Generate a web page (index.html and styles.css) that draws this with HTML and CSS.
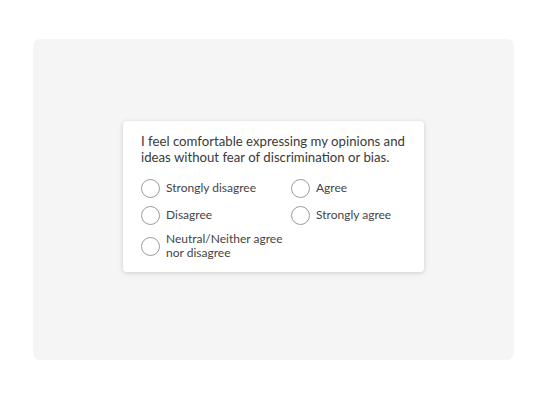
FILE: index.html
```html
<!DOCTYPE html>
<html lang="en">
  <head>
    <meta charset="UTF-8" />
    <title>Survey question</title>
    <link rel="stylesheet" href="styles.css">
  </head>
  <body>
    <div class="panel">
      <div class="card">
        <p class="question">I feel comfortable expressing my opinions and ideas without fear of discrimination or bias.</p>
        <div class="options">
          <label class="option"><span class="radio"></span><span>Strongly disagree</span></label>
          <label class="option"><span class="radio"></span><span>Agree</span></label>
          <label class="option"><span class="radio"></span><span>Disagree</span></label>
          <label class="option"><span class="radio"></span><span>Strongly agree</span></label>
          <label class="option"><span class="radio"></span><span>Neutral/Neither agree<br>nor disagree</span></label>
        </div>
      </div>
    </div>
  </body>
</html>
```

FILE: styles.css
```css
* {
  margin: 0;
  padding: 0;
  box-sizing: border-box;
}
html,
body {
  width: 100%;
  height: 100%;
  background: #fff;
  font-family: "Lato", sans-serif;
}
body {
  padding: 39px 33px 40px 33px;
}
.panel {
  width: 481px;
  height: 321px;
  background: #f5f5f5;
  border-radius: 7px;
  display: flex;
  justify-content: center;
  align-items: center;
  padding-bottom: 6px;
}
.card {
  width: 301px;
  background: #fff;
  border-radius: 4px;
  box-shadow: 0 1px 5px rgba(0, 0, 0, 0.16);
  padding: 12px 10px 12px 18px;
}
.question {
  font-size: 13.2px;
  line-height: 16px;
  color: #3a3a3a;
  margin-bottom: 13px;
}
.options {
  display: grid;
  grid-template-columns: 150px 1fr;
  row-gap: 7px;
}
.option {
  display: flex;
  align-items: center;
  gap: 6px;
  font-size: 12px;
  line-height: 14px;
  color: #444;
  min-height: 20px;
}
.radio {
  flex: none;
  width: 19px;
  height: 19px;
  border: 1px solid #9c9c9c;
  border-radius: 50%;
  background: #fff;
}
```
